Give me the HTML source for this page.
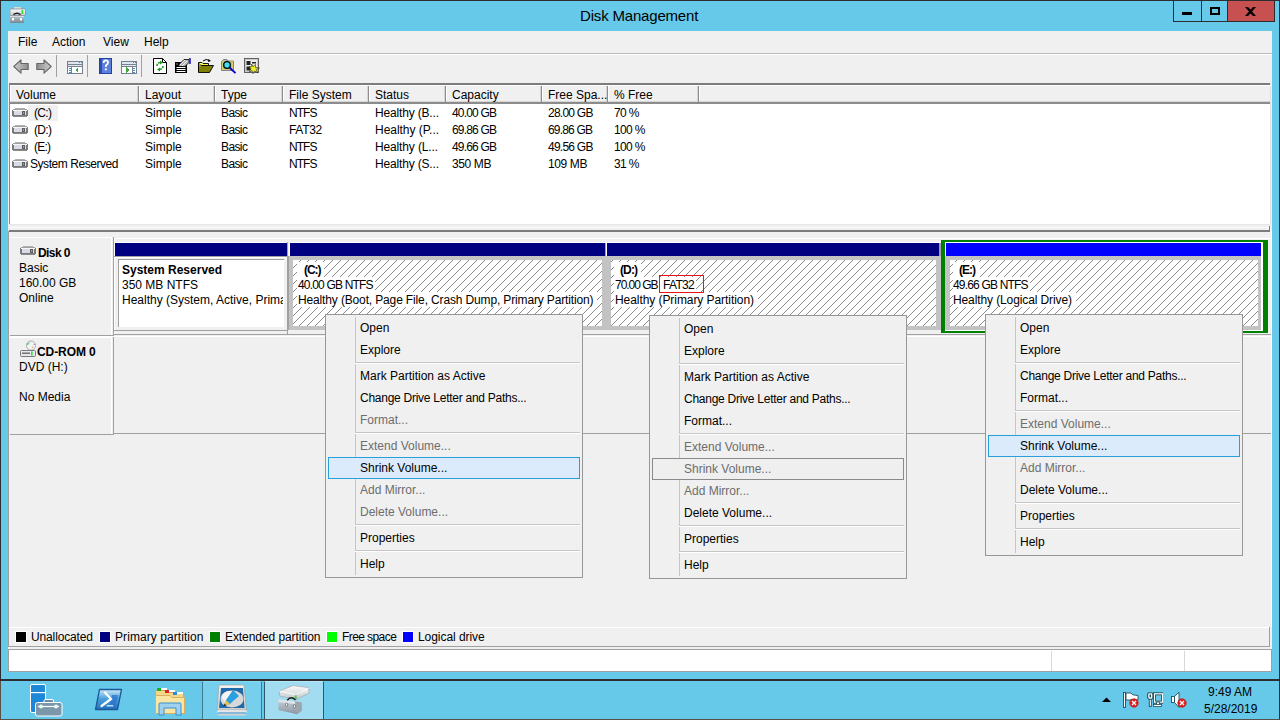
<!DOCTYPE html><html><head><meta charset="utf-8"><style>
html,body{margin:0;padding:0;}
body{width:1280px;height:720px;overflow:hidden;position:relative;background:#67c9ea;font-family:"Liberation Sans",sans-serif;}
div{position:absolute;box-sizing:border-box;}
.t{white-space:nowrap;line-height:15px;font-size:12px;}
</style></head><body>

<div style="left:0px;top:0px;width:1280px;height:1px;background:#2d2d30"></div>
<div style="left:0px;top:0px;width:1px;height:681px;background:#2d2d30"></div>
<div style="left:0px;top:681px;width:1px;height:39px;background:#594f4b"></div>
<div style="left:1279px;top:0px;width:1px;height:720px;background:#2d2d30"></div>
<div class="t" style="left:580px;top:7px;font-size:15px;line-height:18px;letter-spacing:-0.18px">Disk Management</div>
<div style="left:1173px;top:1px;width:29px;height:21px;border:1px solid #2d2d30;border-top:0;border-right:0;"></div>
<div style="left:1201px;top:1px;width:27px;height:21px;border:1px solid #2d2d30;border-top:0;border-right:0;"></div>
<div style="left:1227px;top:1px;width:48px;height:21px;background:#c75050;border:1px solid #2d2d30;border-top:0;"></div>
<div style="left:1182px;top:12px;width:10px;height:3px;background:#000"></div>
<div style="left:1210px;top:7px;width:10px;height:8px;border:2px solid #000"></div>
<svg style="position:absolute;left:1245px;top:7px" width="11" height="9"><path d="M0 0 L3 0 L5.5 2.6 L8 0 L11 0 L7 4.5 L11 9 L8 9 L5.5 6.4 L3 9 L0 9 L4 4.5 Z" fill="#000"/></svg>
<div style="left:8px;top:31px;width:1264px;height:641px;background:#f0f0f0"></div>
<div class="t" style="left:18px;top:35px;font-size:12px;font-weight:400;color:#000;">File</div>
<div class="t" style="left:52px;top:35px;font-size:12px;font-weight:400;color:#000;">Action</div>
<div class="t" style="left:103px;top:35px;font-size:12px;font-weight:400;color:#000;">View</div>
<div class="t" style="left:144px;top:35px;font-size:12px;font-weight:400;color:#000;">Help</div>
<div style="left:8px;top:53px;width:1264px;height:1px;background:#bdbdbd"></div>
<div style="left:8px;top:54px;width:1264px;height:1px;background:#fff"></div>
<div style="left:9px;top:83px;width:1262px;height:142px;background:#fff;border-top:2px solid #7c7c7c;border-left:1px solid #8a8a8a"></div>
<div style="left:10px;top:85px;width:1261px;height:17px;background:#f0f0f0;border-top:1px solid #fff"></div>
<div style="left:10px;top:101px;width:1261px;height:1px;background:#d5d5d5"></div>
<div style="left:10px;top:102px;width:1261px;height:2px;background:#8c8c8c"></div>
<div style="left:10px;top:85px;width:1px;height:16px;background:#fff"></div>
<div style="left:137px;top:86px;width:1px;height:15px;background:#d5d5d5"></div>
<div style="left:138px;top:85px;width:1px;height:17px;background:#8c8c8c"></div>
<div style="left:139px;top:85px;width:1px;height:16px;background:#fff"></div>
<div style="left:213px;top:86px;width:1px;height:15px;background:#d5d5d5"></div>
<div style="left:214px;top:85px;width:1px;height:17px;background:#8c8c8c"></div>
<div style="left:215px;top:85px;width:1px;height:16px;background:#fff"></div>
<div style="left:281px;top:86px;width:1px;height:15px;background:#d5d5d5"></div>
<div style="left:282px;top:85px;width:1px;height:17px;background:#8c8c8c"></div>
<div style="left:283px;top:85px;width:1px;height:16px;background:#fff"></div>
<div style="left:367px;top:86px;width:1px;height:15px;background:#d5d5d5"></div>
<div style="left:368px;top:85px;width:1px;height:17px;background:#8c8c8c"></div>
<div style="left:369px;top:85px;width:1px;height:16px;background:#fff"></div>
<div style="left:444px;top:86px;width:1px;height:15px;background:#d5d5d5"></div>
<div style="left:445px;top:85px;width:1px;height:17px;background:#8c8c8c"></div>
<div style="left:446px;top:85px;width:1px;height:16px;background:#fff"></div>
<div style="left:540px;top:86px;width:1px;height:15px;background:#d5d5d5"></div>
<div style="left:541px;top:85px;width:1px;height:17px;background:#8c8c8c"></div>
<div style="left:542px;top:85px;width:1px;height:16px;background:#fff"></div>
<div style="left:606px;top:86px;width:1px;height:15px;background:#d5d5d5"></div>
<div style="left:607px;top:85px;width:1px;height:17px;background:#8c8c8c"></div>
<div style="left:608px;top:85px;width:1px;height:16px;background:#fff"></div>
<div style="left:697px;top:86px;width:1px;height:15px;background:#d5d5d5"></div>
<div style="left:698px;top:85px;width:1px;height:17px;background:#8c8c8c"></div>
<div style="left:699px;top:85px;width:1px;height:16px;background:#fff"></div>
<div class="t" style="left:16px;top:88px;font-size:12px;font-weight:400;color:#000;">Volume</div>
<div class="t" style="left:145px;top:88px;font-size:12px;font-weight:400;color:#000;">Layout</div>
<div class="t" style="left:221px;top:88px;font-size:12px;font-weight:400;color:#000;">Type</div>
<div class="t" style="left:289px;top:88px;font-size:12px;font-weight:400;color:#000;">File System</div>
<div class="t" style="left:375px;top:88px;font-size:12px;font-weight:400;color:#000;">Status</div>
<div class="t" style="left:452px;top:88px;font-size:12px;font-weight:400;color:#000;">Capacity</div>
<div class="t" style="left:548px;top:88px;font-size:12px;font-weight:400;color:#000;">Free Spa...</div>
<div class="t" style="left:614px;top:88px;font-size:12px;font-weight:400;color:#000;">% Free</div>
<div style="left:28px;top:105px;width:30px;height:16px;background:#f0f0f0"></div>
<div class="t" style="left:34px;top:106px;font-size:12px;font-weight:400;color:#000;letter-spacing:-0.667px">(C:)</div>
<div class="t" style="left:145px;top:106px;font-size:12px;font-weight:400;color:#000;letter-spacing:0.022px">Simple</div>
<div class="t" style="left:221px;top:106px;font-size:12px;font-weight:400;color:#000;letter-spacing:-0.611px">Basic</div>
<div class="t" style="left:289px;top:106px;font-size:12px;font-weight:400;color:#000;letter-spacing:-0.943px">NTFS</div>
<div class="t" style="left:375px;top:106px;font-size:12px;font-weight:400;color:#000;letter-spacing:-0.167px">Healthy (B...</div>
<div class="t" style="left:452px;top:106px;font-size:12px;font-weight:400;color:#000;letter-spacing:-0.810px">40.00 GB</div>
<div class="t" style="left:548px;top:106px;font-size:12px;font-weight:400;color:#000;letter-spacing:-0.753px">28.00 GB</div>
<div class="t" style="left:614px;top:106px;font-size:12px;font-weight:400;color:#000;letter-spacing:-0.648px">70 %</div>
<svg style="position:absolute;left:12px;top:108px" width="16" height="9" shape-rendering="crispEdges">
<rect x="3" y="0" width="10" height="1" fill="#b0b0b0"/>
<rect x="1" y="1" width="14" height="1" fill="#a0a0a0"/>
<rect x="0" y="2" width="16" height="6" fill="#7a7a7a"/>
<rect x="1" y="2" width="14" height="1" fill="#f6f6f6"/>
<rect x="2" y="3" width="12" height="4" fill="#d9dbe8"/>
<rect x="10" y="3" width="3" height="4" fill="#606060"/>
<rect x="11" y="4" width="1" height="2" fill="#33dd33"/>
<rect x="1" y="8" width="14" height="1" fill="#8a8a8a"/>
</svg>
<div class="t" style="left:34px;top:123px;font-size:12px;font-weight:400;color:#000;letter-spacing:-0.667px">(D:)</div>
<div class="t" style="left:145px;top:123px;font-size:12px;font-weight:400;color:#000;letter-spacing:0.022px">Simple</div>
<div class="t" style="left:221px;top:123px;font-size:12px;font-weight:400;color:#000;letter-spacing:-0.611px">Basic</div>
<div class="t" style="left:289px;top:123px;font-size:12px;font-weight:400;color:#000;letter-spacing:-0.313px">FAT32</div>
<div class="t" style="left:375px;top:123px;font-size:12px;font-weight:400;color:#000;letter-spacing:-0.038px">Healthy (P...</div>
<div class="t" style="left:452px;top:123px;font-size:12px;font-weight:400;color:#000;letter-spacing:-0.810px">69.86 GB</div>
<div class="t" style="left:548px;top:123px;font-size:12px;font-weight:400;color:#000;letter-spacing:-0.810px">69.86 GB</div>
<div class="t" style="left:614px;top:123px;font-size:12px;font-weight:400;color:#000;letter-spacing:-0.629px">100 %</div>
<svg style="position:absolute;left:12px;top:125px" width="16" height="9" shape-rendering="crispEdges">
<rect x="3" y="0" width="10" height="1" fill="#b0b0b0"/>
<rect x="1" y="1" width="14" height="1" fill="#a0a0a0"/>
<rect x="0" y="2" width="16" height="6" fill="#7a7a7a"/>
<rect x="1" y="2" width="14" height="1" fill="#f6f6f6"/>
<rect x="2" y="3" width="12" height="4" fill="#d9dbe8"/>
<rect x="10" y="3" width="3" height="4" fill="#606060"/>
<rect x="11" y="4" width="1" height="2" fill="#33dd33"/>
<rect x="1" y="8" width="14" height="1" fill="#8a8a8a"/>
</svg>
<div class="t" style="left:34px;top:140px;font-size:12px;font-weight:400;color:#000;letter-spacing:-0.776px">(E:)</div>
<div class="t" style="left:145px;top:140px;font-size:12px;font-weight:400;color:#000;letter-spacing:0.022px">Simple</div>
<div class="t" style="left:221px;top:140px;font-size:12px;font-weight:400;color:#000;letter-spacing:-0.611px">Basic</div>
<div class="t" style="left:289px;top:140px;font-size:12px;font-weight:400;color:#000;letter-spacing:-0.943px">NTFS</div>
<div class="t" style="left:375px;top:140px;font-size:12px;font-weight:400;color:#000;letter-spacing:-0.139px">Healthy (L...</div>
<div class="t" style="left:452px;top:140px;font-size:12px;font-weight:400;color:#000;letter-spacing:-0.810px">49.66 GB</div>
<div class="t" style="left:548px;top:140px;font-size:12px;font-weight:400;color:#000;letter-spacing:-0.753px">49.56 GB</div>
<div class="t" style="left:614px;top:140px;font-size:12px;font-weight:400;color:#000;letter-spacing:-0.629px">100 %</div>
<svg style="position:absolute;left:12px;top:142px" width="16" height="9" shape-rendering="crispEdges">
<rect x="3" y="0" width="10" height="1" fill="#b0b0b0"/>
<rect x="1" y="1" width="14" height="1" fill="#a0a0a0"/>
<rect x="0" y="2" width="16" height="6" fill="#7a7a7a"/>
<rect x="1" y="2" width="14" height="1" fill="#f6f6f6"/>
<rect x="2" y="3" width="12" height="4" fill="#d9dbe8"/>
<rect x="10" y="3" width="3" height="4" fill="#606060"/>
<rect x="11" y="4" width="1" height="2" fill="#33dd33"/>
<rect x="1" y="8" width="14" height="1" fill="#8a8a8a"/>
</svg>
<div class="t" style="left:30px;top:157px;font-size:12px;font-weight:400;color:#000;letter-spacing:-0.442px">System Reserved</div>
<div class="t" style="left:145px;top:157px;font-size:12px;font-weight:400;color:#000;letter-spacing:0.022px">Simple</div>
<div class="t" style="left:221px;top:157px;font-size:12px;font-weight:400;color:#000;letter-spacing:-0.611px">Basic</div>
<div class="t" style="left:289px;top:157px;font-size:12px;font-weight:400;color:#000;letter-spacing:-0.943px">NTFS</div>
<div class="t" style="left:375px;top:157px;font-size:12px;font-weight:400;color:#000;letter-spacing:-0.167px">Healthy (S...</div>
<div class="t" style="left:452px;top:157px;font-size:12px;font-weight:400;color:#000;letter-spacing:-0.389px">350 MB</div>
<div class="t" style="left:548px;top:157px;font-size:12px;font-weight:400;color:#000;letter-spacing:-0.389px">109 MB</div>
<div class="t" style="left:614px;top:157px;font-size:12px;font-weight:400;color:#000;letter-spacing:-0.648px">31 %</div>
<svg style="position:absolute;left:12px;top:159px" width="16" height="9" shape-rendering="crispEdges">
<rect x="3" y="0" width="10" height="1" fill="#b0b0b0"/>
<rect x="1" y="1" width="14" height="1" fill="#a0a0a0"/>
<rect x="0" y="2" width="16" height="6" fill="#7a7a7a"/>
<rect x="1" y="2" width="14" height="1" fill="#f6f6f6"/>
<rect x="2" y="3" width="12" height="4" fill="#d9dbe8"/>
<rect x="10" y="3" width="3" height="4" fill="#606060"/>
<rect x="11" y="4" width="1" height="2" fill="#33dd33"/>
<rect x="1" y="8" width="14" height="1" fill="#8a8a8a"/>
</svg>
<div style="left:9px;top:224px;width:1262px;height:6px;background:#f0f0f0;border-top:1px solid #e6e6e6"></div>
<div style="left:9px;top:227px;width:1260px;height:1px;background:#fafafa"></div>
<div style="left:9px;top:230px;width:1261px;height:2px;background:#7c7c7c"></div>
<div style="left:1269px;top:226px;width:1px;height:5px;background:#7c7c7c"></div>
<div style="left:1270px;top:83px;width:1px;height:141px;background:#e0e0e0"></div>
<div style="left:8px;top:231px;width:1px;height:416px;background:#a0a0a0"></div>
<div style="left:1271px;top:231px;width:1px;height:396px;background:#fff"></div>
<div style="left:10px;top:237px;width:102px;height:1px;background:#fff"></div>
<div style="left:111px;top:237px;width:1px;height:98px;background:#fff"></div>
<div style="left:113px;top:237px;width:1px;height:198px;background:#a0a0a0"></div>
<div style="left:10px;top:335px;width:103px;height:1px;background:#a0a0a0"></div>
<div style="left:10px;top:336px;width:1261px;height:1px;background:#fff"></div>
<div style="left:114px;top:238px;width:1157px;height:1px;background:#fff"></div>
<div style="left:114px;top:238px;width:1px;height:96px;background:#fff"></div>
<div style="left:114px;top:334px;width:1157px;height:1px;background:#a0a0a0"></div>
<div style="left:115px;top:242px;width:172px;height:1px;background:#fff"></div>
<div style="left:115px;top:243px;width:172px;height:13px;background:#000080"></div>
<div style="left:114px;top:256px;width:174px;height:1px;background:#a0a0a0"></div>
<div style="left:114px;top:257px;width:174px;height:1px;background:#fff"></div>
<div style="left:114px;top:330px;width:174px;height:1px;background:#a0a0a0"></div>
<div style="left:118px;top:259px;width:166px;height:68px;background:#fff;border-top:1px solid #a0a0a0;border-left:1px solid #a0a0a0"></div>
<div style="left:287px;top:242px;width:1px;height:92px;background:#a0a0a0"></div>
<div style="left:289px;top:242px;width:318px;height:1px;background:#fff"></div>
<div style="left:290px;top:243px;width:315px;height:13px;background:#000080"></div>
<div style="left:288px;top:256px;width:318px;height:74px;background:#c3c3c3;border-left:1px solid #a0a0a0"></div>
<svg style="position:absolute;left:293px;top:260px" width="309" height="66" shape-rendering="crispEdges"><defs><pattern id="hc" patternUnits="userSpaceOnUse" x="-293" y="-260" width="8" height="8"><rect x="0" y="0" width="1" height="1" fill="#8a8a8a"/><rect x="7" y="1" width="1" height="1" fill="#8a8a8a"/><rect x="6" y="2" width="1" height="1" fill="#8a8a8a"/><rect x="5" y="3" width="1" height="1" fill="#8a8a8a"/><rect x="4" y="4" width="1" height="1" fill="#8a8a8a"/><rect x="3" y="5" width="1" height="1" fill="#8a8a8a"/><rect x="2" y="6" width="1" height="1" fill="#8a8a8a"/><rect x="1" y="7" width="1" height="1" fill="#8a8a8a"/></pattern></defs><rect width="309" height="66" fill="#fff"/><rect width="309" height="66" fill="url(#hc)"/></svg>
<div style="left:289px;top:243px;width:1px;height:13px;background:#fff"></div>
<div style="left:605px;top:243px;width:1px;height:13px;background:#a0a0a0"></div>
<div style="left:606px;top:243px;width:1px;height:13px;background:#fff"></div>
<div style="left:607px;top:242px;width:334px;height:1px;background:#fff"></div>
<div style="left:607px;top:243px;width:332px;height:13px;background:#000080"></div>
<div style="left:606px;top:256px;width:335px;height:74px;background:#c3c3c3"></div>
<div style="left:939px;top:243px;width:2px;height:13px;background:#a0a0a0"></div>
<svg style="position:absolute;left:611px;top:260px" width="325" height="66" shape-rendering="crispEdges"><defs><pattern id="hd" patternUnits="userSpaceOnUse" x="-611" y="-260" width="8" height="8"><rect x="0" y="0" width="1" height="1" fill="#8a8a8a"/><rect x="7" y="1" width="1" height="1" fill="#8a8a8a"/><rect x="6" y="2" width="1" height="1" fill="#8a8a8a"/><rect x="5" y="3" width="1" height="1" fill="#8a8a8a"/><rect x="4" y="4" width="1" height="1" fill="#8a8a8a"/><rect x="3" y="5" width="1" height="1" fill="#8a8a8a"/><rect x="2" y="6" width="1" height="1" fill="#8a8a8a"/><rect x="1" y="7" width="1" height="1" fill="#8a8a8a"/></pattern></defs><rect width="325" height="66" fill="#fff"/><rect width="325" height="66" fill="url(#hd)"/></svg>
<div style="left:941px;top:240px;width:327px;height:93px;background:#008000"></div>
<div style="left:945px;top:242px;width:318px;height:89px;background:#fff"></div>
<div style="left:946px;top:243px;width:315px;height:13px;background:#0000ff"></div>
<div style="left:945px;top:256px;width:316px;height:74px;background:#c3c3c3"></div>
<svg style="position:absolute;left:950px;top:260px" width="308" height="66" shape-rendering="crispEdges"><defs><pattern id="he" patternUnits="userSpaceOnUse" x="-950" y="-260" width="8" height="8"><rect x="0" y="0" width="1" height="1" fill="#8a8a8a"/><rect x="7" y="1" width="1" height="1" fill="#8a8a8a"/><rect x="6" y="2" width="1" height="1" fill="#8a8a8a"/><rect x="5" y="3" width="1" height="1" fill="#8a8a8a"/><rect x="4" y="4" width="1" height="1" fill="#8a8a8a"/><rect x="3" y="5" width="1" height="1" fill="#8a8a8a"/><rect x="2" y="6" width="1" height="1" fill="#8a8a8a"/><rect x="1" y="7" width="1" height="1" fill="#8a8a8a"/></pattern></defs><rect width="308" height="66" fill="#fff"/><rect width="308" height="66" fill="url(#he)"/></svg>
<div class="t" style="left:122px;top:263px;font-size:12px;font-weight:700;color:#000;">System Reserved</div>
<div class="t" style="left:122px;top:278px;font-size:12px;font-weight:400;color:#000;">350 MB NTFS</div>
<div class="t" style="left:122px;top:293px;width:161px;overflow:hidden">Healthy (System, Active, Primary Partition)</div>
<div style="left:297px;top:262px;width:27px;height:15px;background:#fff"></div>
<div class="t" style="left:304px;top:263px;font-size:12px;font-weight:700;color:#000;letter-spacing:-1.057px">(C:)</div>
<div style="left:297px;top:277px;width:78px;height:15px;background:#fff"></div>
<div class="t" style="left:298px;top:278px;font-size:12px;font-weight:400;color:#000;letter-spacing:-0.819px">40.00 GB NTFS</div>
<div style="left:297px;top:292px;width:300px;height:15px;background:#fff"></div>
<div class="t" style="left:298px;top:293px;font-size:12px;font-weight:400;color:#000;letter-spacing:-0.143px">Healthy (Boot, Page File, Crash Dump, Primary Partition)</div>
<div style="left:614px;top:262px;width:27px;height:15px;background:#fff"></div>
<div class="t" style="left:620px;top:263px;font-size:12px;font-weight:700;color:#000;letter-spacing:-0.891px">(D:)</div>
<div style="left:614px;top:277px;width:82px;height:15px;background:#fff"></div>
<div class="t" style="left:615px;top:278px;font-size:12px;font-weight:400;color:#000;letter-spacing:-1.039px">70.00 GB</div>
<div class="t" style="left:663px;top:278px;font-size:12px;font-weight:400;color:#000;letter-spacing:-0.688px">FAT32</div>
<div style="left:614px;top:292px;width:144px;height:15px;background:#fff"></div>
<div class="t" style="left:615px;top:293px;font-size:12px;font-weight:400;color:#000;letter-spacing:-0.066px">Healthy (Primary Partition)</div>
<div style="left:659px;top:275px;width:45px;height:18px;border:1px solid #e8141b"></div>
<div style="left:953px;top:262px;width:27px;height:15px;background:#fff"></div>
<div class="t" style="left:959px;top:263px;font-size:12px;font-weight:700;color:#000;letter-spacing:-1.000px">(E:)</div>
<div style="left:953px;top:277px;width:77px;height:15px;background:#fff"></div>
<div class="t" style="left:953px;top:278px;font-size:12px;font-weight:400;color:#000;letter-spacing:-0.819px">49.66 GB NTFS</div>
<div style="left:953px;top:292px;width:123px;height:15px;background:#fff"></div>
<div class="t" style="left:953px;top:293px;font-size:12px;font-weight:400;color:#000;letter-spacing:-0.109px">Healthy (Logical Drive)</div>
<svg style="position:absolute;left:20px;top:246px" width="16" height="9" shape-rendering="crispEdges">
<rect x="3" y="0" width="10" height="1" fill="#b0b0b0"/>
<rect x="1" y="1" width="14" height="1" fill="#a0a0a0"/>
<rect x="0" y="2" width="16" height="6" fill="#7a7a7a"/>
<rect x="1" y="2" width="14" height="1" fill="#f6f6f6"/>
<rect x="2" y="3" width="12" height="4" fill="#d9dbe8"/>
<rect x="10" y="3" width="3" height="4" fill="#606060"/>
<rect x="11" y="4" width="1" height="2" fill="#33dd33"/>
<rect x="1" y="8" width="14" height="1" fill="#8a8a8a"/>
</svg>
<div class="t" style="left:38px;top:246px;font-size:12px;font-weight:700;color:#000;letter-spacing:-0.569px">Disk 0</div>
<div class="t" style="left:19px;top:261px;font-size:12px;font-weight:400;color:#000;">Basic</div>
<div class="t" style="left:19px;top:276px;font-size:12px;font-weight:400;color:#000;">160.00 GB</div>
<div class="t" style="left:19px;top:291px;font-size:12px;font-weight:400;color:#000;">Online</div>
<div style="left:10px;top:337px;width:102px;height:1px;background:#fff"></div>
<div style="left:111px;top:337px;width:1px;height:97px;background:#fff"></div>
<div style="left:10px;top:434px;width:103px;height:1px;background:#a0a0a0"></div>
<div style="left:114px;top:433px;width:1157px;height:1px;background:#a0a0a0"></div>
<svg style="position:absolute;left:20px;top:340px" width="16" height="17">
<circle cx="11" cy="5.6" r="4.6" fill="#f2f2f2" stroke="#a8a8a8" stroke-width="0.9"/>
<circle cx="7.6" cy="4" r="1" fill="#44dd44"/><circle cx="9" cy="3" r="0.7" fill="#7ac"/><circle cx="12.6" cy="7.2" r="0.8" fill="#d8b070"/><circle cx="14.2" cy="4.4" r="0.6" fill="#a070c0"/>
<rect x="0.5" y="10.5" width="15" height="6" rx="1" fill="#e8e8ee" stroke="#7a7a7a"/>
<rect x="2" y="12.6" width="8" height="1.2" fill="#555"/>
<rect x="11" y="11.5" width="1.6" height="4" fill="#33dd33"/>
</svg>
<div class="t" style="left:37px;top:345px;font-size:12px;font-weight:700;color:#000;letter-spacing:-0.078px">CD-ROM 0</div>
<div class="t" style="left:19px;top:360px;font-size:12px;font-weight:400;color:#000;">DVD (H:)</div>
<div class="t" style="left:19px;top:390px;font-size:12px;font-weight:400;color:#000;">No Media</div>
<div style="left:9px;top:627px;width:1261px;height:1px;background:#fff"></div>
<div style="left:1269px;top:627px;width:1px;height:20px;background:#a0a0a0"></div>
<div style="left:9px;top:646px;width:1261px;height:1px;background:#a0a0a0"></div>
<div style="left:15px;top:631px;width:12px;height:12px;background:#000;border:1px solid #fff"></div>
<div class="t" style="left:31px;top:630px;font-size:12px;font-weight:400;color:#000;letter-spacing:-0.138px">Unallocated</div>
<div style="left:99px;top:631px;width:12px;height:12px;background:#000080;border:1px solid #fff"></div>
<div class="t" style="left:115px;top:630px;font-size:12px;font-weight:400;color:#000;letter-spacing:0.071px">Primary partition</div>
<div style="left:209px;top:631px;width:12px;height:12px;background:#008000;border:1px solid #fff"></div>
<div class="t" style="left:225px;top:630px;font-size:12px;font-weight:400;color:#000;letter-spacing:-0.071px">Extended partition</div>
<div style="left:326px;top:631px;width:12px;height:12px;background:#00ff00;border:1px solid #fff"></div>
<div class="t" style="left:342px;top:630px;font-size:12px;font-weight:400;color:#000;letter-spacing:-0.580px">Free space</div>
<div style="left:402px;top:631px;width:12px;height:12px;background:#0000ff;border:1px solid #fff"></div>
<div class="t" style="left:418px;top:630px;font-size:12px;font-weight:400;color:#000;letter-spacing:-0.056px">Logical drive</div>
<div style="left:8px;top:649px;width:1264px;height:23px;background:#fff;border-top:1px solid #a0a0a0;border-left:1px solid #a0a0a0;border-right:1px solid #a0a0a0;border-bottom:1px solid #a0a0a0"></div>
<div style="left:1051px;top:651px;width:1px;height:20px;background:#d8d8d8"></div>
<div style="left:1184px;top:651px;width:1px;height:20px;background:#d8d8d8"></div>
<div style="left:325px;top:314px;width:258px;height:264px;background:#f0f0f0;border:1px solid #979797"></div>
<div style="left:355px;top:317px;width:1px;height:258px;background:#c5c5c5"></div>
<div class="t" style="left:360px;top:321px;font-size:12px;font-weight:400;color:#000;">Open</div>
<div class="t" style="left:360px;top:343px;font-size:12px;font-weight:400;color:#000;">Explore</div>
<div style="left:355px;top:362px;width:225px;height:1px;background:#c5c5c5"></div>
<div style="left:355px;top:363px;width:225px;height:1px;background:#fff"></div>
<div class="t" style="left:360px;top:369px;font-size:12px;font-weight:400;color:#000;">Mark Partition as Active</div>
<div class="t" style="left:360px;top:391px;font-size:12px;font-weight:400;color:#000;letter-spacing:-0.26px">Change Drive Letter and Paths...</div>
<div class="t" style="left:360px;top:413px;font-size:12px;font-weight:400;color:#6d6d6d;">Format...</div>
<div style="left:355px;top:432px;width:225px;height:1px;background:#c5c5c5"></div>
<div style="left:355px;top:433px;width:225px;height:1px;background:#fff"></div>
<div class="t" style="left:360px;top:439px;font-size:12px;font-weight:400;color:#6d6d6d;">Extend Volume...</div>
<div style="left:328px;top:457px;width:252px;height:22px;background:#dcebfc;border:1px solid #26a0da"></div>
<div class="t" style="left:360px;top:461px;font-size:12px;font-weight:400;color:#000;">Shrink Volume...</div>
<div class="t" style="left:360px;top:483px;font-size:12px;font-weight:400;color:#6d6d6d;">Add Mirror...</div>
<div class="t" style="left:360px;top:505px;font-size:12px;font-weight:400;color:#6d6d6d;">Delete Volume...</div>
<div style="left:355px;top:524px;width:225px;height:1px;background:#c5c5c5"></div>
<div style="left:355px;top:525px;width:225px;height:1px;background:#fff"></div>
<div class="t" style="left:360px;top:531px;font-size:12px;font-weight:400;color:#000;">Properties</div>
<div style="left:355px;top:550px;width:225px;height:1px;background:#c5c5c5"></div>
<div style="left:355px;top:551px;width:225px;height:1px;background:#fff"></div>
<div class="t" style="left:360px;top:557px;font-size:12px;font-weight:400;color:#000;">Help</div>
<div style="left:649px;top:315px;width:258px;height:264px;background:#f0f0f0;border:1px solid #979797"></div>
<div style="left:679px;top:318px;width:1px;height:258px;background:#c5c5c5"></div>
<div class="t" style="left:684px;top:322px;font-size:12px;font-weight:400;color:#000;">Open</div>
<div class="t" style="left:684px;top:344px;font-size:12px;font-weight:400;color:#000;">Explore</div>
<div style="left:679px;top:363px;width:225px;height:1px;background:#c5c5c5"></div>
<div style="left:679px;top:364px;width:225px;height:1px;background:#fff"></div>
<div class="t" style="left:684px;top:370px;font-size:12px;font-weight:400;color:#000;">Mark Partition as Active</div>
<div class="t" style="left:684px;top:392px;font-size:12px;font-weight:400;color:#000;letter-spacing:-0.26px">Change Drive Letter and Paths...</div>
<div class="t" style="left:684px;top:414px;font-size:12px;font-weight:400;color:#000;">Format...</div>
<div style="left:679px;top:433px;width:225px;height:1px;background:#c5c5c5"></div>
<div style="left:679px;top:434px;width:225px;height:1px;background:#fff"></div>
<div class="t" style="left:684px;top:440px;font-size:12px;font-weight:400;color:#6d6d6d;">Extend Volume...</div>
<div style="left:652px;top:458px;width:252px;height:22px;background:#efefef;border:1px solid #8a8a8a"></div>
<div class="t" style="left:684px;top:462px;font-size:12px;font-weight:400;color:#6d6d6d;">Shrink Volume...</div>
<div class="t" style="left:684px;top:484px;font-size:12px;font-weight:400;color:#6d6d6d;">Add Mirror...</div>
<div class="t" style="left:684px;top:506px;font-size:12px;font-weight:400;color:#000;">Delete Volume...</div>
<div style="left:679px;top:525px;width:225px;height:1px;background:#c5c5c5"></div>
<div style="left:679px;top:526px;width:225px;height:1px;background:#fff"></div>
<div class="t" style="left:684px;top:532px;font-size:12px;font-weight:400;color:#000;">Properties</div>
<div style="left:679px;top:551px;width:225px;height:1px;background:#c5c5c5"></div>
<div style="left:679px;top:552px;width:225px;height:1px;background:#fff"></div>
<div class="t" style="left:684px;top:558px;font-size:12px;font-weight:400;color:#000;">Help</div>
<div style="left:985px;top:314px;width:258px;height:242px;background:#f0f0f0;border:1px solid #979797"></div>
<div style="left:1015px;top:317px;width:1px;height:236px;background:#c5c5c5"></div>
<div class="t" style="left:1020px;top:321px;font-size:12px;font-weight:400;color:#000;">Open</div>
<div class="t" style="left:1020px;top:343px;font-size:12px;font-weight:400;color:#000;">Explore</div>
<div style="left:1015px;top:362px;width:225px;height:1px;background:#c5c5c5"></div>
<div style="left:1015px;top:363px;width:225px;height:1px;background:#fff"></div>
<div class="t" style="left:1020px;top:369px;font-size:12px;font-weight:400;color:#000;letter-spacing:-0.26px">Change Drive Letter and Paths...</div>
<div class="t" style="left:1020px;top:391px;font-size:12px;font-weight:400;color:#000;">Format...</div>
<div style="left:1015px;top:410px;width:225px;height:1px;background:#c5c5c5"></div>
<div style="left:1015px;top:411px;width:225px;height:1px;background:#fff"></div>
<div class="t" style="left:1020px;top:417px;font-size:12px;font-weight:400;color:#6d6d6d;">Extend Volume...</div>
<div style="left:988px;top:435px;width:252px;height:22px;background:#dcebfc;border:1px solid #26a0da"></div>
<div class="t" style="left:1020px;top:439px;font-size:12px;font-weight:400;color:#000;">Shrink Volume...</div>
<div class="t" style="left:1020px;top:461px;font-size:12px;font-weight:400;color:#6d6d6d;">Add Mirror...</div>
<div class="t" style="left:1020px;top:483px;font-size:12px;font-weight:400;color:#000;">Delete Volume...</div>
<div style="left:1015px;top:502px;width:225px;height:1px;background:#c5c5c5"></div>
<div style="left:1015px;top:503px;width:225px;height:1px;background:#fff"></div>
<div class="t" style="left:1020px;top:509px;font-size:12px;font-weight:400;color:#000;">Properties</div>
<div style="left:1015px;top:528px;width:225px;height:1px;background:#c5c5c5"></div>
<div style="left:1015px;top:529px;width:225px;height:1px;background:#fff"></div>
<div class="t" style="left:1020px;top:535px;font-size:12px;font-weight:400;color:#000;">Help</div>
<div style="left:0px;top:679px;width:1280px;height:2px;background:#2d2d30"></div>
<div style="left:202px;top:681px;width:60px;height:38px;background:#76cfec;border-left:1px solid #3e7b90;border-right:1px solid #3e7b90;border-top:1px solid #84d8f2"></div>
<div style="left:264px;top:681px;width:60px;height:38px;background:#a2dcf0;border-left:1px solid #2c5868;border-right:1px solid #2c5868;border-top:1px solid #b4e8f8"></div>
<svg style="position:absolute;left:1102px;top:697px" width="9" height="6"><path d="M0 5 L4.5 0.5 L9 5 Z" fill="#000"/></svg>
<div class="t" style="left:1208px;top:685px;color:#000">9:49 AM</div>
<div class="t" style="left:1204px;top:702px;color:#000">5/28/2019</div>
<svg style="position:absolute;left:10px;top:7px" width="16" height="16" viewBox="0 0 16 16" >
<defs><linearGradient id="tdg" x1="0" y1="0" x2="0" y2="1"><stop offset="0" stop-color="#ffffff"/><stop offset="1" stop-color="#c4c6d0"/></linearGradient>
<linearGradient id="ttb" x1="0" y1="0" x2="0" y2="1"><stop offset="0" stop-color="#c4ced6"/><stop offset="1" stop-color="#7a8690"/></linearGradient></defs>
<rect x="0" y="8" width="14" height="8" fill="url(#ttb)"/>
<rect x="0" y="8" width="14" height="2" fill="#d0dce4"/>
<rect x="2" y="11" width="2" height="2.5" fill="#fff"/><rect x="10" y="11" width="2" height="2.5" fill="#fff"/>
<rect x="4" y="0" width="7" height="2" fill="#dadada"/>
<rect x="0" y="2" width="15.5" height="6.5" rx="1" fill="url(#tdg)" stroke="#8a8e96" stroke-width="0.8"/>
<path d="M3.5 7.6 Q7 4.8 10.5 7.6" fill="none" stroke="#202020" stroke-width="1.5"/>
<rect x="11.5" y="3" width="1.6" height="4" fill="#33dd33"/>
</svg>
<svg style="position:absolute;left:13px;top:59px" width="16" height="15" viewBox="0 0 16 15" ><defs><linearGradient id="arg" x1="0" y1="0" x2="1" y2="0"><stop offset="0" stop-color="#d0d0d0"/><stop offset="0.6" stop-color="#a8a8a8"/><stop offset="1" stop-color="#8c8c8c"/></linearGradient></defs><path d="M0.8 7.5 L8 0.8 L8 4.5 L15.2 4.5 L15.2 10.5 L8 10.5 L8 14.2 Z" fill="url(#arg)" stroke="#666" stroke-width="1.1" stroke-linejoin="round"/></svg>
<svg style="position:absolute;left:36px;top:59px" width="16" height="15" viewBox="0 0 16 15" ><g transform="translate(16,0) scale(-1,1)"><path d="M0.8 7.5 L8 0.8 L8 4.5 L15.2 4.5 L15.2 10.5 L8 10.5 L8 14.2 Z" fill="url(#arg)" stroke="#666" stroke-width="1.1" stroke-linejoin="round"/></g></svg>
<div style="left:56px;top:55px;width:1px;height:22px;background:#a0a0a0"></div>
<div style="left:87px;top:55px;width:1px;height:22px;background:#a0a0a0"></div>
<div style="left:141px;top:55px;width:1px;height:22px;background:#a0a0a0"></div>
<svg style="position:absolute;left:67px;top:61px" width="16" height="13" viewBox="0 0 16 13" shape-rendering="crispEdges"><rect x="0" y="0" width="16" height="13" fill="#75818f"/>
<rect x="1" y="1" width="14" height="2" fill="#dfe6ee"/><rect x="12" y="1" width="1" height="1" fill="#75818f"/><rect x="14" y="1" width="1" height="1" fill="#75818f"/>
<rect x="1" y="4" width="14" height="1" fill="#dfe6ee"/>
<rect x="1" y="6" width="14" height="6" fill="#fff"/><rect x="4" y="6" width="1" height="6" fill="#75818f"/>
<rect x="2" y="7" width="2" height="1" fill="#3d8ed0"/><rect x="2" y="9" width="2" height="1" fill="#3d8ed0"/><rect x="2" y="11" width="2" height="1" fill="#3d8ed0"/>
<path d="M8 9 L11 6 L11 12 Z" fill="#3caa3c"/></svg>
<svg style="position:absolute;left:121px;top:61px" width="16" height="13" viewBox="0 0 16 13" shape-rendering="crispEdges"><rect x="0" y="0" width="16" height="13" fill="#75818f"/>
<rect x="1" y="1" width="14" height="2" fill="#dfe6ee"/><rect x="12" y="1" width="1" height="1" fill="#75818f"/><rect x="14" y="1" width="1" height="1" fill="#75818f"/>
<rect x="1" y="4" width="14" height="1" fill="#dfe6ee"/>
<rect x="1" y="6" width="14" height="6" fill="#fff"/><rect x="11" y="6" width="1" height="6" fill="#75818f"/>
<rect x="12" y="7" width="2" height="1" fill="#3d8ed0"/><rect x="12" y="9" width="2" height="1" fill="#3d8ed0"/><rect x="12" y="11" width="2" height="1" fill="#3d8ed0"/>
<path d="M8 9 L5 6 L5 12 Z" fill="#3caa3c"/></svg>
<svg style="position:absolute;left:99px;top:58px" width="13" height="16" viewBox="0 0 13 16" ><rect x="0" y="0" width="13" height="16" fill="#2f4fb0"/><rect x="3" y="1" width="9" height="14" fill="#5d7fdc"/>
<rect x="0" y="0" width="13" height="16" fill="none" stroke="#1e3a8a" stroke-width="1"/>
<path d="M4.6 5 Q4.6 2.4 6.8 2.4 Q9 2.4 9 4.6 Q9 6 7.6 6.8 Q6.8 7.3 6.8 9" fill="none" stroke="#fff" stroke-width="1.8"/>
<rect x="5.9" y="10.4" width="1.9" height="1.9" fill="#fff"/></svg>
<svg style="position:absolute;left:153px;top:58px" width="14" height="16" viewBox="0 0 14 16" ><path d="M0.5 0.5 L9.5 0.5 L13.5 4.5 L13.5 15.5 L0.5 15.5 Z" fill="#fff" stroke="#000"/>
<path d="M9.5 0.5 L9.5 4.5 L13.5 4.5" fill="none" stroke="#000"/>
<path d="M4 8 Q4 4.5 8 4.5" fill="none" stroke="#1a9a1a" stroke-width="1.6" stroke-dasharray="2 1"/>
<path d="M7 2.5 L10 4.6 L7 6.5 Z" fill="#1a9a1a"/>
<path d="M10 8 Q10 11.5 6 11.5" fill="none" stroke="#1a9a1a" stroke-width="1.6" stroke-dasharray="2 1"/>
<path d="M7 9.5 L4 11.4 L7 13.5 Z" fill="#1a9a1a"/></svg>
<svg style="position:absolute;left:175px;top:58px" width="16" height="15" viewBox="0 0 16 15" ><rect x="0" y="4" width="12" height="11" fill="#000"/>
<rect x="1.5" y="9" width="9" height="1" fill="#fff"/><rect x="1.5" y="11" width="9" height="1" fill="#fff"/><rect x="1.5" y="13" width="9" height="1" fill="#fff"/>
<rect x="1.5" y="5.5" width="1" height="1" fill="#fff"/>
<path d="M3.5 7 L9 1.5 L14 1.5 L14 4.5 L10 8.5 L4.5 8.5 Z" fill="#b8b8b8" stroke="#000" stroke-width="0.8"/>
<path d="M5 7 L10 2 M7 8 L12 3" stroke="#fff" stroke-width="0.7"/>
<rect x="14.3" y="0" width="1.4" height="6" fill="#0000cc"/></svg>
<svg style="position:absolute;left:198px;top:59px" width="16" height="14" viewBox="0 0 16 14" ><path d="M5 2 Q8 -0.8 11.5 1.5" fill="none" stroke="#000" stroke-width="1"/><path d="M10.5 0 L13 2 L10 3 Z" fill="#000"/>
<path d="M0.5 3.5 L4 3.5 L5 4.5 L10.5 4.5 L10.5 6.5 L3 6.5 L0.5 12.5 Z" fill="#ffff40" stroke="#000" stroke-width="0.9"/>
<path d="M0.5 4 L0.5 13.5 L11.5 13.5 L15.5 6.5 L3.5 6.5 Z" fill="#808000" stroke="#000" stroke-width="0.9"/>
<path d="M1 5 L3 5 M1.5 7 L2.5 7" stroke="#fff" stroke-width="0.8"/></svg>
<svg style="position:absolute;left:221px;top:59px" width="16" height="15" viewBox="0 0 16 15" ><path d="M0.5 2.5 L2.5 0.5 L6 0.5 L7 2 L12.5 2 L12.5 11.5 L0.5 11.5 Z" fill="#b8b8b8" stroke="#707070" stroke-width="0.8"/>
<rect x="1.5" y="2.5" width="10" height="8" fill="none" stroke="#e8e820" stroke-width="1" stroke-dasharray="1 1"/>
<circle cx="6" cy="6" r="3.3" fill="#40e0f0" stroke="#000" stroke-width="1.3"/>
<path d="M8.5 8.5 L14.5 14.2" stroke="#0000cc" stroke-width="1.8"/></svg>
<svg style="position:absolute;left:244px;top:58px" width="16" height="16" viewBox="0 0 16 16" ><rect x="0.5" y="0.5" width="14" height="14" fill="#c8c8c8" stroke="#555" stroke-width="0.9"/>
<rect x="2" y="2" width="11" height="11" fill="#eee"/>
<rect x="2.5" y="3" width="4" height="4" fill="#222"/><rect x="8" y="4" width="4" height="1.5" fill="#222"/>
<rect x="2.5" y="8.5" width="4" height="4" fill="#222"/>
<path d="M7.5 6 L9 8.5 L11.5 6.5 L11.5 9.5 L15.5 10 L12 11.5 L14 14.8 L10.5 13 L9 15.8 L8 12.5 L5.5 14 L7 10.5 L5 9 L8 8.5 Z" fill="#f0f020" stroke="#222" stroke-width="0.6"/></svg>
<div style="left:10px;top:85px;width:1261px;height:1px;background:#fff"></div>
<div style="left:0px;top:719px;width:1280px;height:1px;background:#594f4b"></div>
<svg style="position:absolute;left:30px;top:684px" width="34" height="33" viewBox="0 0 34 33" ><rect x="0.5" y="0.5" width="15" height="28" rx="1.5" fill="#1e88d8" stroke="#fff"/>
<rect x="1" y="8" width="14" height="1.2" fill="#fff"/>
<rect x="14" y="15.5" width="9.5" height="4" rx="1.5" fill="#6f8a9a" stroke="#fff"/>
<rect x="5.5" y="18.5" width="26.5" height="13.5" rx="2" fill="#7a98aa" stroke="#fff"/>
<path d="M8 22.5 L29 22.5" stroke="#fff" stroke-width="1.2"/>
<circle cx="11" cy="22.5" r="1.5" fill="#cfe" stroke="#fff"/><circle cx="26" cy="22.5" r="1.5" fill="#cfe" stroke="#fff"/></svg>
<svg style="position:absolute;left:94px;top:688px" width="30" height="24" viewBox="0 0 30 24" ><defs><linearGradient id="psg" x1="0" y1="0" x2="0" y2="1"><stop offset="0" stop-color="#cde9f8"/><stop offset="0.45" stop-color="#4aa3dc"/><stop offset="1" stop-color="#2470c0"/></linearGradient></defs>
<path d="M5.5 1.5 L27.5 1.5 L23.5 21.5 L1.5 21.5 Z" fill="url(#psg)" stroke="#1a5a98" stroke-width="1.3" stroke-linejoin="round"/>
<path d="M18 7 L24 7 L21.5 20 L15 20 Z" fill="#2a6fcc" opacity="0.7"/>
<path d="M11 4.5 L17 11 L7.5 18" fill="none" stroke="#fff" stroke-width="2.2" stroke-linecap="round"/>
<rect x="12.5" y="17" width="7" height="1.6" rx="0.8" fill="#bde0f6"/></svg>
<svg style="position:absolute;left:154px;top:687px" width="32" height="29" viewBox="0 0 32 29" ><path d="M1.5 3.5 L12 3.5 L13 5.5 L29.5 5.5 L30.5 26.5 L1.5 26.5 Z" fill="#f2d98a" stroke="#d2a95a"/>
<rect x="3" y="1" width="4" height="3" fill="#1bb31b"/><rect x="7" y="1" width="6" height="2" fill="#fff"/>
<rect x="11" y="3" width="4" height="3" fill="#e02020"/><rect x="15" y="3" width="6" height="2" fill="#fff"/>
<rect x="19" y="5" width="4" height="3" fill="#2a8ae0"/><rect x="23" y="5" width="6" height="2" fill="#fff"/>
<path d="M1.5 8.5 L16 8.5 L18 10.5 L30.5 10.5 L30.5 26.5 L1.5 26.5 Z" fill="#f8e6a2" stroke="#d8b060"/>
<path d="M5 28 L5 17 Q5 16 6 16 L26 16 Q27 16 27 17 L27 28 L22 28 L22 21 L10 21 L10 28 Z" fill="#9fd0ee" stroke="#3a90d0" stroke-width="1"/></svg>
<svg style="position:absolute;left:216px;top:684px" width="32" height="32" viewBox="0 0 32 32" ><defs><linearGradient id="dmg" x1="0" y1="0" x2="0" y2="1"><stop offset="0" stop-color="#f4f4f4"/><stop offset="1" stop-color="#cfcfcf"/></linearGradient></defs>
<path d="M3 1 L28 1 L30.5 26 L1 26 Z" fill="url(#dmg)" stroke="#9aa" stroke-width="0.8"/>
<path d="M5 4 L27 4 L28.5 24 L3 24 Z" fill="#1f6aa8"/>
<ellipse cx="16" cy="15" rx="11.5" ry="8.5" fill="#d8d8d8"/>
<ellipse cx="13" cy="13" rx="7" ry="6" fill="#f4f4f4"/>
<path d="M17 6 L23 12 L14 20 L9 21.5 L10 16 Z" fill="#2aa0e0"/>
<path d="M10 16 L14 20 L8 22 Z" fill="#e6c24a"/><path d="M8.5 19.5 L10.5 21.5 L7.5 22.5 Z" fill="#333"/>
<rect x="1" y="26" width="30" height="3" rx="1.5" fill="#e4e4e4"/><rect x="2" y="28.5" width="28" height="1.2" fill="#2a8ad0"/>
<rect x="2" y="29.5" width="28" height="2" rx="1" fill="#d4d4d4"/></svg>
<svg style="position:absolute;left:278px;top:685px" width="32" height="30" viewBox="0 0 32 30" ><defs><linearGradient id="d2g" x1="0" y1="0" x2="0" y2="1"><stop offset="0" stop-color="#fbfbfb"/><stop offset="1" stop-color="#c4c8ce"/></linearGradient>
<linearGradient id="t2g" x1="0" y1="0" x2="0" y2="1"><stop offset="0" stop-color="#c8d2da"/><stop offset="1" stop-color="#8a96a2"/></linearGradient></defs>
<path d="M0.5 14.5 L17 16.5 L23.5 17.2 L24 25.5 L19 29.2 L0.5 25 Z" fill="url(#t2g)"/>
<path d="M17 16.5 L23.5 17.2 L24 25.5 L19 29.2 Z" fill="#9aa6b0"/>
<path d="M0.5 14.5 L17 16.5 L17 19 L0.5 17 Z" fill="#dfe6ea"/>
<path d="M1.2 6.1 L15.1 0.6 L30.1 2.5 L31.5 7.8 L18.4 14.4 L1.8 11.1 Z" fill="url(#d2g)" stroke="#9a9ea6" stroke-width="0.6"/>
<path d="M1.2 6.1 L18 9.5 L30.5 3.5" fill="none" stroke="#ffffff" stroke-width="0.8"/>
<path d="M18 9.5 L18.4 14.4" stroke="#8a8e96" stroke-width="0.6"/>
<rect x="16.6" y="10.6" width="1.8" height="3.4" fill="#33dd33"/>
<path d="M9.3 15.2 Q13 10.5 17.5 15" fill="none" stroke="#1a1a1a" stroke-width="1.4"/>
<ellipse cx="8.6" cy="19.8" rx="1.1" ry="1.7" fill="#fff" stroke="#444" stroke-width="0.6"/><ellipse cx="16.4" cy="21.4" rx="1.1" ry="1.7" fill="#fff" stroke="#444" stroke-width="0.6"/></svg>
<svg style="position:absolute;left:1122px;top:691px" width="18" height="18" viewBox="0 0 18 18" ><rect x="1.5" y="1.5" width="2" height="15" fill="#fff" stroke="#1d4e5e" stroke-width="0.9"/>
<path d="M4 2 L9 2 Q10 4 12 4 L16 4.5 L16 9 L11 9 Q9.5 8 8 9 L4 9 Z" fill="#fff" stroke="#1d4e5e" stroke-width="0.9"/><circle cx="12" cy="12" r="4.3" fill="#e02020" stroke="#b00" stroke-width="0.5"/><path d="M10 10 L14 14 M14 10 L10 14" stroke="#fff" stroke-width="1.3"/></svg>
<svg style="position:absolute;left:1147px;top:692px" width="16" height="15" viewBox="0 0 16 15" ><rect x="7.5" y="1.8" width="8" height="8.4" fill="none" stroke="#1d4e5e" stroke-width="3"/>
<rect x="7.5" y="1.8" width="8" height="8.4" fill="none" stroke="#fff" stroke-width="1.2"/>
<rect x="9.5" y="10" width="3" height="3" fill="#fff" stroke="#1d4e5e" stroke-width="0.8"/>
<rect x="6.5" y="12.5" width="8" height="2" fill="#fff" stroke="#1d4e5e" stroke-width="0.8"/>
<rect x="2.3" y="6.5" width="2" height="8" fill="#fff" stroke="#1d4e5e" stroke-width="0.9"/>
<rect x="0.7" y="0.7" width="5.2" height="6.5" rx="1.6" fill="#fff" stroke="#1d4e5e" stroke-width="1.1"/>
<rect x="2.6" y="2.4" width="1.4" height="3" fill="#1d4e5e"/></svg>
<svg style="position:absolute;left:1171px;top:691px" width="18" height="18" viewBox="0 0 18 18" ><rect x="0.5" y="5.5" width="3" height="6" fill="#fff" stroke="#1d4e5e" stroke-width="0.9"/>
<path d="M3.5 5.5 L8 1.2 L8 16.5 L3.5 11.5 Z" fill="#fff" stroke="#1d4e5e" stroke-width="0.9"/><circle cx="11" cy="12" r="4.3" fill="#e02020" stroke="#b00" stroke-width="0.5"/><path d="M9 10 L13 14 M13 10 L9 14" stroke="#fff" stroke-width="1.3"/></svg>
</body></html>
